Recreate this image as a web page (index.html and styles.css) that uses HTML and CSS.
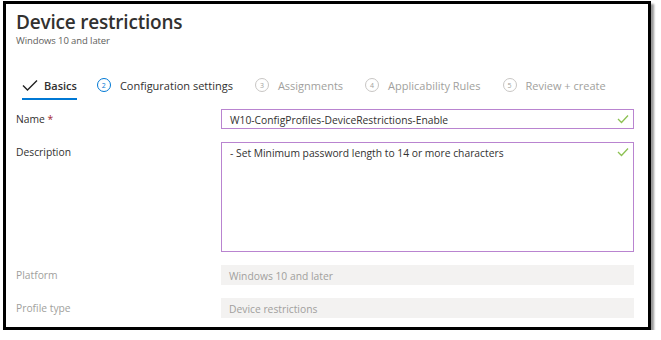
FILE: index.html
```html
<!DOCTYPE html>
<html lang="en">
<head>
  <meta charset="UTF-8">
  <title>Device restrictions</title>
  <link rel="stylesheet" href="styles.css">
</head>
<body>
  <div class="frame">
    <div class="header">
      <h1>Device restrictions</h1>
      <div class="subtitle">Windows 10 and later</div>
    </div>

    <div class="tabs">
      <div class="tab active">
        <svg class="check" width="16" height="12" viewBox="0 0 16 12"><path d="M1 6.5 L5.5 11 L15 1.5" fill="none" stroke="#222" stroke-width="1.4"/></svg>
        <span>Basics</span>
      </div>
      <div class="tab current"><span class="num">2</span><span>Configuration settings</span></div>
      <div class="tab off"><span class="num">3</span><span>Assignments</span></div>
      <div class="tab off"><span class="num">4</span><span>Applicability Rules</span></div>
      <div class="tab off"><span class="num">5</span><span>Review + create</span></div>
    </div>

    <div class="form">
      <div class="row">
        <label>Name <span class="req">*</span></label>
        <div class="field input">W10-ConfigProfiles-DeviceRestrictions-Enable
          <svg class="ok" width="12" height="10" viewBox="0 0 12 10"><path d="M1 5 L4.5 8.5 L11 1.5" fill="none" stroke="#8cc152" stroke-width="1.3"/></svg>
        </div>
      </div>
      <div class="row">
        <label>Description</label>
        <div class="field textarea">- Set Minimum password length to 14 or more characters
          <svg class="ok" width="12" height="10" viewBox="0 0 12 10"><path d="M1 5 L4.5 8.5 L11 1.5" fill="none" stroke="#8cc152" stroke-width="1.3"/></svg>
        </div>
      </div>
      <div class="row dim">
        <label>Platform</label>
        <div class="field readonly">Windows 10 and later</div>
      </div>
      <div class="row dim">
        <label>Profile type</label>
        <div class="field readonly">Device restrictions</div>
      </div>
    </div>
  </div>
</body>
</html>
```

FILE: styles.css
```css
body {
  margin: 0;
  font-family: "Open Sans", "Noto Sans", sans-serif;
  background: #fff;
  color: #323130;
}
.frame {
  margin: 1px 0 0 3px;
  width: 642px;
  height: 323px;
  border: 3px solid #000;
  box-shadow: 3px 3px 2px #999;
  overflow: hidden;
}
.header {
  padding: 6px 0 0 10px;
}
h1 {
  margin: 0;
  font-size: 19px;
  font-weight: 600;
  line-height: 24px;
  letter-spacing: -0.2px;
}
.subtitle {
  font-size: 9.5px;
  color: #605e5c;
  line-height: 14px;
  letter-spacing: -0.1px;
}
.tabs {
  display: flex;
  margin: 24px 0 0 16px;
  white-space: nowrap;
}
.tab {
  display: flex;
  flex-shrink: 0;
  align-items: center;
  gap: 9px;
  font-size: 11px;
  margin-right: 22px;
  height: 26px;
  border-bottom: 2px solid transparent;
}
.tab.active {
  border-bottom-color: #0078d4;
  font-weight: 600;
  gap: 6px;
  margin-right: 20px;
}
.tab.off {
  color: #a19f9d;
}
.num {
  width: 12px;
  height: 12px;
  border: 1px solid #c8c6c4;
  border-radius: 50%;
  font-size: 7px;
  display: flex;
  align-items: center;
  justify-content: center;
}
.current .num {
  border-color: #0078d4;
  color: #0078d4;
}
.form {
  padding: 9px 14px 0 10px;
}
.row {
  display: grid;
  grid-template-columns: 205px 1fr;
  margin-bottom: 13px;
}
.row label {
  font-size: 10.3px;
  padding-top: 3px;
}
.req {
  color: #a4262c;
}
.field {
  position: relative;
  font-size: 10.3px;
  padding: 3px 8px;
  box-sizing: border-box;
}
.input {
  height: 20px;
  border: 1px solid #b984d0;
}
.textarea {
  height: 110px;
  border: 1px solid #b984d0;
}
.ok {
  position: absolute;
  right: 4px;
  top: 4px;
}
.dim label {
  color: #a19f9d;
}
.readonly {
  height: 20px;
  padding-top: 4px;
  background: #f3f2f1;
  color: #a19f9d;
}
```
